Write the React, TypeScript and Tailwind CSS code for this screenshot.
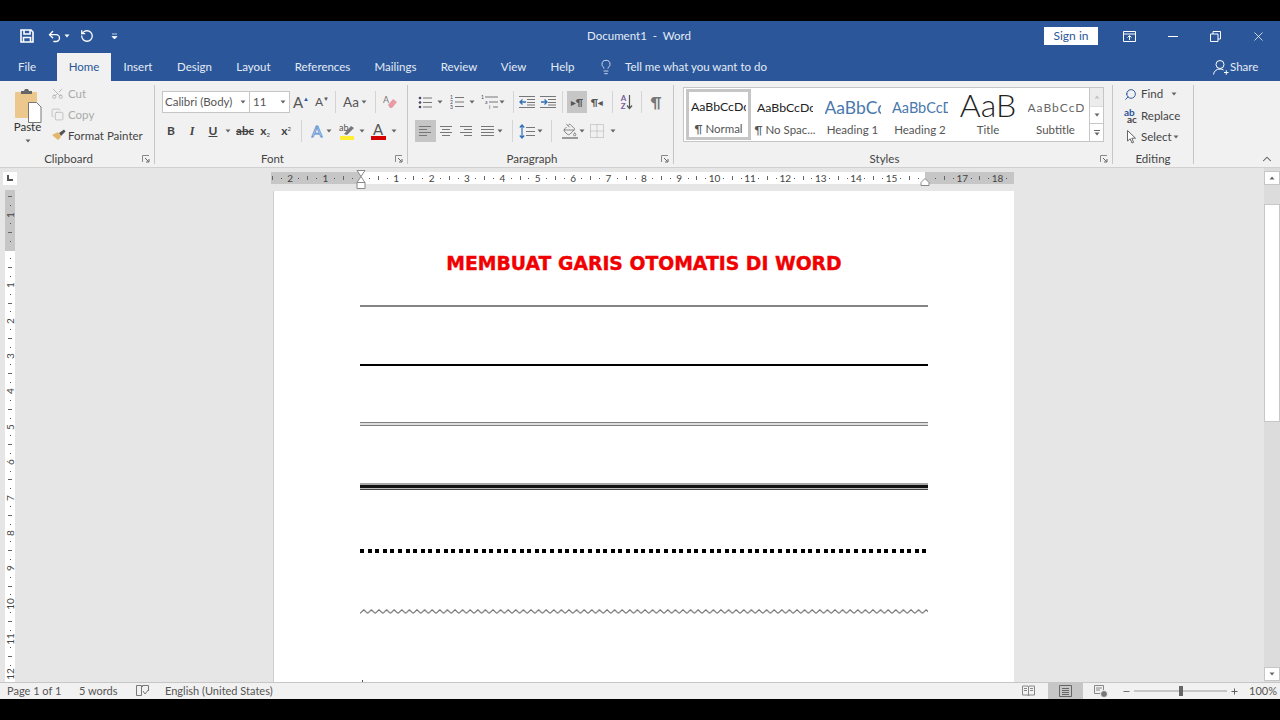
import type { ReactNode } from "react";
import { Undo2, RotateCcw, Lightbulb, Scissors, Copy, PaintBucket, Search, ChevronUp, X, Minus, Plus } from "lucide-react";

const tabs = [
  { label: "Insert", w: "w-[54px]" },
  { label: "Design", w: "w-[59px]" },
  { label: "Layout", w: "w-[59px]" },
  { label: "References", w: "w-[79px]" },
  { label: "Mailings", w: "w-[67px]" },
  { label: "Review", w: "w-[60px]" },
  { label: "View", w: "w-[49px]" },
  { label: "Help", w: "w-[49px]" },
];

const hMarks = Array.from({ length: 84 }, (_, i) => i - 10);
const vMarks = Array.from({ length: 56 }, (_, i) => i - 6);

function Caret({ className = "" }: { className?: string }) {
  return (
    <svg width="6" height="4" viewBox="0 0 6 4" className={"shrink-0 " + className}>
      <path d="M0.5 0.5h5L3 3.5z" fill="#666" />
    </svg>
  );
}

function Cell({ className = "", children }: { className?: string; children?: ReactNode }) {
  return <div className={"flex h-[22px] shrink-0 items-center justify-center " + className}>{children}</div>;
}

function Sep({ className = "" }: { className?: string }) {
  return <div className={"h-[22px] w-px shrink-0 bg-[#d4d4d4] " + className} />;
}

function GroupLabel({ children, className = "", launcher = true }: { children: ReactNode; className?: string; launcher?: boolean }) {
  return (
    <div className={"mt-auto -mb-[2px] flex h-[14px] items-center text-[11.5px] leading-[14px] text-[#444] " + className}>
      <div className="flex-1 text-center">{children}</div>
      {launcher && (
        <div className="flex w-[17px] justify-end">
          <svg width="8" height="8" viewBox="0 0 8 8" className="mr-[4px]">
            <path d="M0.5 7V0.5H7" fill="none" stroke="#888" />
            <path d="M3 3l3.5 3.5M7 4v3H4" fill="none" stroke="#666" />
          </svg>
        </div>
      )}
    </div>
  );
}

function TextLines({ x = 0, w = 9, ys }: { x?: number; w?: number; ys: number[] }) {
  return (
    <>
      {ys.map((y) => (
        <path key={y} d={`M${x} ${y}h${w}`} stroke="#777" strokeWidth="1" />
      ))}
    </>
  );
}

function AlignIcon({ kind }: { kind: "left" | "center" | "right" | "justify" }) {
  const rows = {
    left: ["M1 2.5h12", "M1 5.5h8", "M1 8.5h12", "M1 11.5h8"],
    center: ["M1 2.5h12", "M3 5.5h8", "M1 8.5h12", "M3 11.5h8"],
    right: ["M1 2.5h12", "M5 5.5h8", "M1 8.5h12", "M5 11.5h8"],
    justify: ["M1 2.5h13", "M1 5.5h13", "M1 8.5h13", "M1 11.5h13"],
  }[kind];
  return (
    <svg width="15" height="14" viewBox="0 0 15 14">
      {rows.map((d) => (
        <path key={d} d={d} stroke="#777" />
      ))}
    </svg>
  );
}

function Ruler() {
  return (
    <div className="relative mt-[4px] h-[12px] w-[743px] bg-[linear-gradient(90deg,#c6c6c6_90px,#ffffff_90px,#ffffff_654px,#c6c6c6_654px)]">
      <div className="-ml-[3px] flex h-full">
        {hMarks.map((k) => (
          <div key={k} className="flex h-full w-[8.85px] shrink-0 items-center justify-center">
            {k === 0 || k === 64 ? null : k % 4 === 0 ? (
              <span className="text-[10px] leading-none text-[#444]">{Math.abs(k / 4)}</span>
            ) : k % 2 === 0 ? (
              <div className="h-[4px] w-px bg-[#666]" />
            ) : (
              <div className="h-px w-px bg-[#555]" />
            )}
          </div>
        ))}
      </div>
      <svg width="10" height="20" viewBox="0 0 10 20" className="absolute left-[85px] -top-[2px]">
        <path d="M1 .5h8L5 6.500 9 12.500H1L5 6.500z" fill="#fff" stroke="#888" />
        <path d="M1 12.500h8v6H1z" fill="#fff" stroke="#888" />
      </svg>
      <svg width="10" height="8" viewBox="0 0 10 8" className="absolute left-[649px] top-[6px]">
        <path d="M5 .5l4 4v3H1v-3z" fill="#fff" stroke="#888" />
      </svg>
    </div>
  );
}

function VerticalRuler() {
  return (
    <div className="mt-[5px] h-[492px] w-[10px] overflow-hidden bg-[linear-gradient(180deg,#c6c6c6_61px,#ffffff_61px)] pt-[2.5px]">
      {vMarks.map((k) => (
        <div key={k} className="flex h-[8.85px] w-full items-center justify-center">
          {k % 4 === 0 && k !== 0 ? (
            <span className="-rotate-90 text-[10px] leading-none text-[#444]">{Math.abs(k / 4)}</span>
          ) : k === 0 ? null : k % 2 === 0 ? (
            <div className="h-px w-[4px] bg-[#666]" />
          ) : (
            <div className="h-px w-px bg-[#555]" />
          )}
        </div>
      ))}
    </div>
  );
}

export default function App() {
  return (
    <div className="flex h-[720px] w-[1280px] flex-col overflow-hidden bg-black font-['Lato','Noto_Sans',sans-serif] text-[#444]">
      <div className="h-[21px] shrink-0" />

      {/* title bar */}
      <div className="relative flex h-[32px] shrink-0 items-center bg-[#2b579a] pb-[2px] text-[#e4ebf5]">
        <svg width="14" height="14" viewBox="0 0 14 14" className="ml-[20px]">
          <path d="M1 1h10l2 2v10H1z M4 1v4h6V1 M3.500 13V8.500h7V13" fill="none" stroke="#fff" strokeWidth="1.6" />
        </svg>
        <Undo2 size={15} strokeWidth={2.2} className="ml-[13px] text-white" />
        <Caret className="ml-[2px] [&>path]:fill-white" />
        <RotateCcw size={14} strokeWidth={2.2} className="ml-[10px] text-white" />
        <svg width="7" height="7" viewBox="0 0 7 7" className="ml-[17px]">
          <path d="M1 1h5M1 3.500h5L3.500 6z" fill="#fff" stroke="#fff" strokeWidth=".7" />
        </svg>
        <div className="ml-[466px] -mt-[1px] w-[110px] text-center text-[11.5px] whitespace-nowrap">Document1&nbsp; -&nbsp; Word</div>
        <div className="ml-[350px] flex h-[18px] w-[54px] items-center justify-center bg-white text-[12px] text-[#2b579a]">Sign in</div>
        <svg width="13" height="11" viewBox="0 0 13 11" className="ml-[25px]">
          <path d="M.5.500h12v10H.5zM.5 3h12" fill="none" stroke="#fff" />
          <path d="M6.500 9V5M4.500 6.500l2-2 2 2" fill="none" stroke="#fff" />
        </svg>
        <div className="ml-[32px] h-px w-[10px] bg-white" />
        <svg width="11" height="11" viewBox="0 0 11 11" className="ml-[32px]">
          <path d="M.5 3h7.500v7.500H.5zM3 3V.5h7.500V8H8" fill="none" stroke="#fff" />
        </svg>
        <X size={15} strokeWidth={1.2} className="ml-[30px] text-white" />
      </div>

      {/* tabs */}
      <div className="flex h-[28px] shrink-0 items-stretch bg-[#2b579a] text-[11.5px] text-[#e4ebf5]">
        <div className="flex w-[57px] items-center justify-center pr-[3px]">File</div>
        <div className="flex w-[54px] items-center justify-center bg-[#f1f1f1] text-[#2b579a]">Home</div>
        {tabs.map((t) => (
          <div key={t.label} className={"flex items-center justify-center " + t.w}>
            {t.label}
          </div>
        ))}
        <Lightbulb size={16} strokeWidth={1.3} className="ml-[11px] self-center" />
        <div className="ml-[11px] flex items-center whitespace-nowrap">Tell me what you want to do</div>
        <svg width="17" height="17" viewBox="0 0 17 17" className="ml-auto self-center">
          <circle cx="8" cy="5.500" r="4" fill="none" stroke="#fff" />
          <path d="M1.500 15.500c.5-3.500 3-5.500 6.500-5.500 1.500 0 2.500.3 3.500 1M12 13.500h4.500M14.250 11.250v4.500" fill="none" stroke="#fff" />
        </svg>
        <div className="ml-[1px] mr-[22px] flex w-[28px] items-center">Share</div>
      </div>

      {/* ribbon */}
      <div className="relative flex h-[87px] shrink-0 border-b border-[#d0d0d0] bg-[#f1f1f1] pt-[4px] text-[11.5px]">
        {/* clipboard */}
        <div className="flex h-[79px] w-[155px] shrink-0 flex-col border-r border-[#c6c6c6]">
          <div className="flex h-[61px]">
            <div className="flex w-[51px] shrink-0 flex-col items-center pl-[4px]">
              <svg width="28" height="36" viewBox="0 0 28 36" className="mt-[3px] shrink-0">
                <rect x="1" y="4" width="22" height="26" rx="1" fill="#ecc88c" />
                <path d="M7 6V3h3l1-2h3l1 2h3v3z" fill="#666" />
                <path d="M14.500 14.500h8l4.500 4.500v15.500h-12.500z" fill="#fff" stroke="#777" />
              </svg>
              <div className="-mt-[4px] text-[11.5px] leading-[14px] text-[#333]">Paste</div>
              <Caret className="mt-[5px]" />
            </div>
            <div className="-mt-[2px] flex flex-col text-[#aaa]">
              <div className="flex h-[22px] items-center">
                <div className="w-[17px]">
                  <Scissors size={13} strokeWidth={1.4} className="-rotate-90 text-[#aaa]" />
                </div>
                <span>Cut</span>
              </div>
              <div className="flex h-[23px] items-center">
                <div className="w-[17px]">
                  <Copy size={13} strokeWidth={1.2} className="text-[#aaa]" />
                </div>
                <span>Copy</span>
              </div>
              <div className="flex h-[21px] items-center text-[#444]">
                <div className="w-[17px]">
                  <svg width="15" height="13" viewBox="0 0 15 13">
                    <path d="M1 6l6-3 3 5-3 3z" fill="#e3b768" />
                    <path d="M8 4l5-3.500 1.500 2L10 7z" fill="#555" />
                  </svg>
                </div>
                <span className="whitespace-nowrap">Format Painter</span>
              </div>
            </div>
          </div>
          <GroupLabel>Clipboard</GroupLabel>
        </div>

        {/* font */}
        <div className="flex h-[79px] w-[253px] shrink-0 flex-col border-r border-[#c6c6c6] pl-[7px]">
          <div className="mt-[6px] flex items-center">
            <div className="flex h-[22px] w-[88px] shrink-0 items-center justify-between border border-[#c6c6c6] bg-white pl-[2px] pr-[3px] text-[11.5px] text-[#555]">
              <span className="whitespace-nowrap">Calibri (Body)</span>
              <Caret />
            </div>
            <div className="flex h-[22px] w-[40px] shrink-0 items-center justify-between border border-l-0 border-[#c6c6c6] bg-white pl-[3px] pr-[3px] text-[11.5px] text-[#555]">
              <span>11</span>
              <Caret />
            </div>
            <Cell className="ml-[1px] w-[20px] text-[15px] text-[#555]">
              A<span className="-mt-[8px] text-[6px] text-[#2b579a]">▲</span>
            </Cell>
            <Cell className="ml-[1px] w-[20px] text-[12px] text-[#555]">
              A<span className="-mt-[8px] text-[6px]">▼</span>
            </Cell>
            <Sep className="ml-[3px]" />
            <Cell className="ml-[5px] w-[20px] text-[13.5px] text-[#555]">Aa</Cell>
            <Caret />
            <Sep className="ml-[8px]" />
            <Cell className="ml-[4px] w-[20px]">
              <svg width="15" height="14" viewBox="0 0 15 14">
                <text x="0" y="8" fontSize="9" fill="#777">A</text>
                <path d="M5 10l5-6 4 3-5 6H7z" fill="#e99aa4" />
              </svg>
            </Cell>
          </div>
          <div className="mt-[7px] flex items-center text-[#444]">
            <Cell className="w-[18px] text-[12px] font-bold">B</Cell>
            <Cell className="ml-[3px] w-[18px] font-['Liberation_Serif',serif] text-[12px] font-bold italic">I</Cell>
            <Cell className="ml-[3px] w-[18px] text-[12px] font-bold underline">U</Cell>
            <Caret className="ml-[3px]" />
            <Cell className="ml-[4px] w-[20px] text-[11.5px] font-bold line-through">abc</Cell>
            <Cell className="ml-[1px] w-[18px] text-[12px] font-bold">
              x<span className="mt-[6px] text-[6px] font-normal">2</span>
            </Cell>
            <Cell className="ml-[3px] w-[18px] text-[12px] font-bold">
              x<span className="-mt-[6px] text-[6px] font-normal">2</span>
            </Cell>
            <Sep className="ml-[6px]" />
            <Cell className="ml-[6px] w-[18px]">
              <svg width="16" height="16" viewBox="0 0 16 16">
                <text x="8" y="14" textAnchor="middle" fontSize="16" fill="#dceafa" stroke="#5b8fd0" strokeWidth=".8">A</text>
              </svg>
            </Cell>
            <Caret />
            <Cell className="ml-[6px] w-[18px]">
              <svg width="17" height="17" viewBox="0 0 17 17">
                <text x="0" y="8" fontSize="9" fill="#555">ab</text>
                <path d="M5 11l7-8 3 2-7 7z" fill="#777" />
                <rect x="1" y="13" width="14" height="4" fill="#ffee33" />
              </svg>
            </Cell>
            <Caret className="ml-[3px]" />
            <Cell className="ml-[4px] w-[18px]">
              <div className="flex flex-col items-center leading-none">
                <span className="text-[15px] leading-[13px] text-[#555]">A</span>
                <div className="h-[4px] w-[15px] bg-[#d40000]" />
              </div>
            </Cell>
            <Caret className="ml-[4px]" />
          </div>
          <GroupLabel className="-ml-[7px]">Font</GroupLabel>
        </div>

        {/* paragraph */}
        <div className="flex h-[79px] w-[266px] shrink-0 flex-col border-r border-[#c6c6c6] pl-[7px]">
          <div className="mt-[6px] flex items-center">
            <Cell className="w-[20px]">
              <svg width="15" height="13" viewBox="0 0 15 13">
                <circle cx="2" cy="2" r="1.300" fill="#446" />
                <circle cx="2" cy="6.500" r="1.300" fill="#446" />
                <circle cx="2" cy="11" r="1.300" fill="#446" />
                <TextLines x={5} w={9} ys={[2, 6.5, 11]} />
              </svg>
            </Cell>
            <Cell className="w-[10px]"><Caret /></Cell>
            <Cell className="ml-[2px] w-[20px]">
              <svg width="15" height="14" viewBox="0 0 15 14">
                <text x="0" y="4" fontSize="5" fill="#446">1</text>
                <text x="0" y="9" fontSize="5" fill="#446">2</text>
                <text x="0" y="14" fontSize="5" fill="#446">3</text>
                <TextLines x={5} w={9} ys={[2.5, 7, 11.5]} />
              </svg>
            </Cell>
            <Cell className="w-[10px]"><Caret /></Cell>
            <Cell className="ml-[1px] w-[24px]">
              <svg width="18" height="14" viewBox="0 0 18 14">
                <text x="0" y="4" fontSize="5" fill="#446">1</text>
                <text x="4" y="9" fontSize="5" fill="#446">a</text>
                <text x="8" y="14" fontSize="5" fill="#446">i</text>
                <TextLines x={4} w={13} ys={[2]} />
                <TextLines x={8} w={9} ys={[7]} />
                <TextLines x={12} w={5} ys={[12]} />
              </svg>
            </Cell>
            <Caret className="-ml-[3px]" />
            <Sep className="ml-[8px]" />
            <Cell className="ml-[3px] w-[20px]">
              <svg width="16" height="12" viewBox="0 0 16 12">
                <path d="M0 .5h16M8 3.500h8M8 6.500h8M8 9h8M0 11.500h16" stroke="#777" />
                <path d="M7 6H1M3.500 3.500L1 6l2.500 2.500" fill="none" stroke="#2f6fb5" strokeWidth="1.300" />
              </svg>
            </Cell>
            <Cell className="ml-[1px] w-[20px]">
              <svg width="16" height="12" viewBox="0 0 16 12">
                <path d="M0 .5h16M8 3.500h8M8 6.500h8M8 9h8M0 11.500h16" stroke="#777" />
                <path d="M1 6h6M4.500 3.500L7 6 4.500 8.500" fill="none" stroke="#2f6fb5" strokeWidth="1.300" />
              </svg>
            </Cell>
            <Sep className="ml-[4px]" />
            <Cell className="ml-[4px] w-[20px] bg-[#c6c6c6] text-[10px] font-bold text-[#555]">
              <span className="text-[6px]">▶</span>¶
            </Cell>
            <Cell className="w-[20px] text-[10px] font-bold text-[#555]">
              ¶<span className="text-[6px]">◀</span>
            </Cell>
            <Sep className="ml-[5px]" />
            <Cell className="ml-[4px] w-[20px]">
              <div className="flex flex-col text-[8px] font-bold leading-[8px] text-[#7a5a9e]">
                <span>A</span>
                <span>Z</span>
              </div>
              <svg width="7" height="15" viewBox="0 0 7 15">
                <path d="M3.500 0v13M1 10.500l2.500 3 2.500-3" fill="none" stroke="#555" strokeWidth="1.200" />
              </svg>
            </Cell>
            <Sep className="ml-[4px]" />
            <Cell className="ml-[4px] w-[20px] text-[15px] font-bold text-[#777]">¶</Cell>
          </div>
          <div className="mt-[7px] flex items-center">
            <Cell className="w-[21px] bg-[#c6c6c6]"><AlignIcon kind="left" /></Cell>
            <Cell className="w-[20px]"><AlignIcon kind="center" /></Cell>
            <Cell className="w-[21px]"><AlignIcon kind="right" /></Cell>
            <Cell className="w-[20px]"><AlignIcon kind="justify" /></Cell>
            <Caret />
            <Sep className="ml-[9px]" />
            <Cell className="ml-[4px] w-[20px]">
              <svg width="16" height="15" viewBox="0 0 16 15">
                <path d="M3 1v13M.8 3.500L3 1l2.200 2.500M.8 11.500L3 14l2.200-2.500" fill="none" stroke="#2f6fb5" strokeWidth="1.200" />
                <path d="M7 3.500h9M7 7.500h9M7 11.500h9" stroke="#777" />
              </svg>
            </Cell>
            <Caret />
            <Sep className="ml-[8px]" />
            <Cell className="ml-[8px] w-[20px]">
              <div className="flex flex-col items-center">
                <PaintBucket size={14} strokeWidth={1.3} className="text-[#666]" />
                <div className="h-[2px] w-[16px] bg-[#9a9a9a]" />
              </div>
            </Cell>
            <Caret className="-ml-px" />
            <Cell className="ml-[2px] w-[20px]">
              <svg width="14" height="14" viewBox="0 0 14 14">
                <path d="M.5.500h13v13H.5zM7 .5v13M.5 7h13" fill="none" stroke="#aaa" strokeDasharray="1 1" />
              </svg>
            </Cell>
            <Caret className="ml-[3px]" />
          </div>
          <GroupLabel className="-ml-[7px]">Paragraph</GroupLabel>
        </div>

        {/* styles */}
        <div className="flex h-[79px] w-[439px] shrink-0 flex-col border-r border-[#c6c6c6] pl-[9px]">
          <div className="mt-[2px] flex h-[55px] w-[421px] border border-[#c6c6c6] bg-white py-px pl-[2px]">
            <div className="flex w-[65px] shrink-0 flex-col items-center overflow-hidden border-[3px] border-[#c6c6c6] pt-[7px] text-[#222]">
              <div className="flex h-[20px] w-[55px] items-center overflow-hidden whitespace-nowrap text-[12.3px]">AaBbCcDc</div>
              <div className="mt-[4px] text-[11.5px] whitespace-nowrap text-[#555]">¶ Normal</div>
            </div>
            <div className="flex w-[68px] shrink-0 flex-col items-center pt-[9px] text-[#222]">
              <div className="flex h-[20px] w-[56px] items-center overflow-hidden whitespace-nowrap text-[12.3px]">AaBbCcDc</div>
              <div className="mt-[3px] whitespace-nowrap text-[11.5px] text-[#555]">¶ No Spac...</div>
            </div>
            <div className="flex w-[67px] shrink-0 flex-col items-center pt-[9px]">
              <div className="flex h-[20px] w-[56px] items-center overflow-hidden whitespace-nowrap text-[17.5px] text-[#4a78ad]">AaBbCc</div>
              <div className="mt-[3px] whitespace-nowrap text-[11.5px] text-[#555]">Heading 1</div>
            </div>
            <div className="flex w-[68px] shrink-0 flex-col items-center pt-[9px]">
              <div className="flex h-[20px] w-[56px] items-center overflow-hidden whitespace-nowrap text-[14.5px] text-[#4a78ad]">AaBbCcD</div>
              <div className="mt-[3px] whitespace-nowrap text-[11.5px] text-[#555]">Heading 2</div>
            </div>
            <div className="flex w-[68px] shrink-0 flex-col items-center pt-[4px]">
              <div className="flex h-[24px] w-[56px] items-start justify-center overflow-hidden whitespace-nowrap text-[32px] font-light leading-[24px] text-[#222]">AaB</div>
              <div className="mt-[4px] text-[11.5px] text-[#555]">Title</div>
            </div>
            <div className="flex w-[67px] shrink-0 flex-col items-center pt-[9px]">
              <div className="flex h-[20px] w-[56px] items-center overflow-hidden whitespace-nowrap text-[12px] tracking-[1px] text-[#666]">AaBbCcD</div>
              <div className="mt-[3px] text-[11.5px] text-[#555]">Subtitle</div>
            </div>
            <div className="-my-px flex w-[14px] shrink-0 flex-col border-l border-[#c6c6c6]">
              <div className="flex h-[19px] items-center justify-center border-b border-[#dcdcdc] bg-[#ececec]">
                <Caret className="rotate-180 opacity-30" />
              </div>
              <div className="flex h-[18px] items-center justify-center border-b border-[#c6c6c6]">
                <Caret />
              </div>
              <div className="flex h-[17px] flex-col items-center justify-center gap-px">
                <div className="h-px w-[6px] bg-[#666]" />
                <Caret />
              </div>
            </div>
          </div>
          <GroupLabel className="-ml-[9px]">Styles</GroupLabel>
        </div>

        {/* editing */}
        <div className="flex h-[79px] w-[81px] shrink-0 flex-col border-r border-[#c6c6c6] pl-[11px]">
          <div className="-mt-[2px] flex flex-col">
            <div className="flex h-[22px] items-center">
              <div className="w-[17px]">
                <Search size={13} strokeWidth={1.8} className="-scale-x-100 text-[#2b579a]" />
              </div>
              <span className="w-[30px]">Find</span>
              <Caret />
            </div>
            <div className="flex h-[22px] items-center">
              <div className="flex w-[17px] flex-col text-[10px] font-bold leading-[7px]">
                <span className="text-[#2b579a]">ab</span>
                <span className="pl-[3px] text-[#444]">ac</span>
              </div>
              <span>Replace</span>
            </div>
            <div className="flex h-[20px] items-center">
              <div className="w-[17px] pl-[3px]">
                <svg width="10" height="14" viewBox="0 0 10 14">
                  <path d="M.5.500v10.500l2.700-2.200 1.800 4.200 1.600-.7-1.800-4.100h3.700z" fill="#fff" stroke="#666" />
                </svg>
              </div>
              <span>Select</span>
              <Caret className="ml-[1px]" />
            </div>
          </div>
          <GroupLabel className="-ml-[11px]" launcher={false}>Editing</GroupLabel>
        </div>

        <ChevronUp size={14} strokeWidth={1.8} className="ml-[66px] mt-[67px] text-[#555]" />
      </div>

      {/* document area */}
      <div className="flex min-h-0 flex-1 bg-[#e6e6e6]">
        <div className="flex w-[20px] shrink-0 flex-col items-center">
          <div className="mt-[4px] flex h-[13px] w-[14px] items-center justify-center bg-white">
            <div className="-mt-[2px] h-[6px] w-[6px] border-b-2 border-l-2 border-[#555]" />
          </div>
          <VerticalRuler />
        </div>
        <div className="flex min-w-0 flex-1 flex-col pl-[251px]">
          <Ruler />
          <div className="ml-[2px] mt-[7px] h-[492px] w-[741px] overflow-hidden border-l border-[#cfcfcf] bg-white pl-[86px] pr-[86px] pt-[61px]">
            <div className="h-[24px] text-center font-['DejaVu_Sans',sans-serif] text-[18.8px] font-bold leading-[24px] whitespace-nowrap text-[#f00000] [-webkit-text-stroke:0.4px_#f00000]">
              MEMBUAT GARIS OTOMATIS DI WORD
            </div>
            <div className="mt-[29px] h-[2px] bg-[#858585]" />
            <div className="mt-[57px] h-[2px] bg-black" />
            <div className="mt-[56px] h-[4px] border-y-[1.5px] border-[#808080] bg-[#dddddd]" />
            <div className="mt-[57px]">
              <div className="h-[2px] bg-[#a8a8a8]" />
              <div className="h-[3px] bg-[#111]" />
              <div className="h-[1px] bg-[#bbb]" />
              <div className="h-[1px] bg-[#444]" />
            </div>
            <div className="mt-[59px] h-[4px] bg-[repeating-linear-gradient(90deg,#000_0,#000_4px,transparent_4px,transparent_7.6px)]" />
            <svg width="568" height="5" className="mt-[56px] block">
              <defs>
                <pattern id="wave" width="7.6" height="5" patternUnits="userSpaceOnUse">
                  <path d="M0 4.500L3.800 .8l3.800 3.700" fill="none" stroke="#666" strokeWidth="1" />
                </pattern>
              </defs>
              <rect width="568" height="5" fill="url(#wave)" />
            </svg>
            <div className="ml-[2px] mt-[66px] h-[3px] w-px bg-[#555]" />
          </div>
        </div>
        <div className="flex w-[16px] shrink-0 flex-col bg-[#dcdcdc]">
          <div className="mt-[3px] flex h-[14px] items-center justify-center border border-[#c6c6c6] bg-white">
            <Caret className="rotate-180" />
          </div>
          <div className="mt-[19px] h-[218px] border border-[#c6c6c6] bg-white" />
          <div className="mt-auto mb-[2px] flex h-[14px] items-center justify-center border border-[#c6c6c6] bg-white">
            <Caret />
          </div>
        </div>
      </div>

      {/* status bar */}
      <div className="flex h-[16px] shrink-0 items-center bg-[#f1f1f1] text-[11px] leading-[16px] text-[#555] shadow-[0_-1px_0_#c6c6c6]">
        <span className="ml-[7px] w-[72px] whitespace-nowrap">Page 1 of 1</span>
        <span className="w-[57px] whitespace-nowrap">5 words</span>
        <svg width="14" height="12" viewBox="0 0 14 12">
          <path d="M.5.500h5v10h-5zM6.500 2V.5h6V6" fill="none" stroke="#777" />
          <path d="M7 6l2 3 4-5" fill="none" stroke="#777" />
        </svg>
        <span className="ml-[15px] w-[110px] whitespace-nowrap">English (United States)</span>
        <svg width="13" height="12" viewBox="0 0 13 12" className="ml-[747px]">
          <path d="M.5 1h5.500l.5 1 .5-1h5.500v9H7l-.5 1-.5-1H.5zM6.500 2v8M2 3.500h3M2 5.500h3M8 3.500h3M8 5.500h3" fill="none" stroke="#888" />
        </svg>
        <div className="ml-[13px] flex h-full w-[35px] items-center justify-center bg-[#c6c6c6]">
          <svg width="13" height="12" viewBox="0 0 13 12">
            <path d="M.5.500h12v11H.5zM3 3.500h7M3 5.500h7M3 7.500h7M3 9.500h7" fill="none" stroke="#666" />
          </svg>
        </div>
        <svg width="14" height="13" viewBox="0 0 14 13" className="ml-[11px]">
          <path d="M.5.500h9v8H.5zM2 3h6M2 5h4" fill="none" stroke="#888" />
          <circle cx="10" cy="9" r="3.500" fill="#777" stroke="#f1f1f1" />
        </svg>
        <Minus size={9} strokeWidth={2.5} className="ml-[13.5px] text-[#666]" />
        <div className="relative ml-[3px] h-[2px] w-[93px] bg-[#c6c6c6]">
          <div className="absolute left-[45px] -top-[4px] h-[10px] w-[4px] bg-[#666]" />
        </div>
        <Plus size={9} strokeWidth={2.5} className="ml-[3px] text-[#555]" />
        <span className="ml-[10.5px] whitespace-nowrap">100%</span>
      </div>
      <div className="h-[21px] shrink-0" />
    </div>
  );
}
